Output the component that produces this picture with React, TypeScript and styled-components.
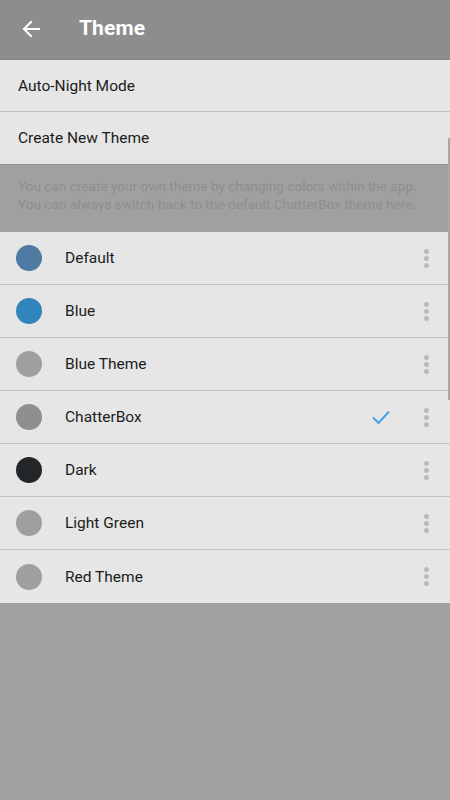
import styled, { createGlobalStyle } from 'styled-components';

const GlobalStyle = createGlobalStyle`
  html, body {
    margin: 0;
    padding: 0;
    background: #a0a0a0;
  }
  body {
    font-family: Roboto, "Liberation Sans", sans-serif;
  }
`;

type Theme = { name: string; color: string; checked?: boolean };

const themes: Theme[] = [
  { name: 'Default', color: '#4f7aa1' },
  { name: 'Blue', color: '#2f85bc' },
  { name: 'Blue Theme', color: '#9f9f9f' },
  { name: 'ChatterBox', color: '#8e8e8e', checked: true },
  { name: 'Dark', color: '#232628' },
  { name: 'Light Green', color: '#9f9f9f' },
  { name: 'Red Theme', color: '#9f9f9f' },
];

function App() {
  return (
    <Screen>
      <GlobalStyle />
      <Header>
        <BackButton aria-label="back">
          <svg width="20" height="20" viewBox="0 0 20 20" fill="none">
            <path d="M18 10H3M10 3L3 10L10 17" stroke="#fff" strokeWidth="2" strokeLinecap="square" />
          </svg>
        </BackButton>
        <Title>Theme</Title>
      </Header>
      <MenuRow>Auto-Night Mode</MenuRow>
      <MenuRow $last>Create New Theme</MenuRow>
      <Info>
        You can create your own theme by changing colors within the app.
        <br />
        You can always switch back to the default ChatterBox theme here.
      </Info>
      <List>
        {themes.map((t) => (
          <ThemeRow key={t.name}>
            <Swatch $color={t.color} />
            <ThemeName>{t.name}</ThemeName>
            {t.checked && (
              <Check width="20" height="16" viewBox="0 0 20 16" fill="none">
                <path d="M2 8.5L7.5 14L18 2.5" stroke="#4aa3e8" strokeWidth="2.2" />
              </Check>
            )}
            <Kebab>
              <Dot />
              <Dot />
              <Dot />
            </Kebab>
          </ThemeRow>
        ))}
      </List>
      <ScrollThumb />
    </Screen>
  );
}

export default App;

const Screen = styled.div`
  position: relative;
  width: 450px;
  min-height: 800px;
  background: #a0a0a0;
  overflow: hidden;
`;

const Header = styled.header`
  display: flex;
  align-items: center;
  height: 60px;
  background: #8d8d8d;
  border-bottom: 1px solid #838383;
  box-sizing: border-box;
`;

const BackButton = styled.button`
  display: flex;
  align-items: center;
  justify-content: center;
  width: 24px;
  height: 24px;
  margin: 0 0 2px 19px;
  padding: 0;
  border: 0;
  background: transparent;
`;

const Title = styled.h1`
  margin: 0 0 4px 36px;
  font-size: 21px;
  font-weight: 700;
  color: #ffffff;
  letter-spacing: 0.1px;
`;

const MenuRow = styled.div<{ $last?: boolean }>`
  display: flex;
  align-items: center;
  height: ${(p) => (p.$last ? '53px' : '52px')};
  padding-left: 18px;
  box-sizing: border-box;
  background: #e6e6e6;
  border-bottom: 1px solid ${(p) => (p.$last ? '#8f8f8f' : '#c2c2c2')};
  font-size: 15.5px;
  color: #1c1c1c;
`;

const Info = styled.p`
  margin: 0;
  height: 67px;
  padding: 12px 18px 0;
  box-sizing: border-box;
  background: #a0a0a0;
  font-size: 13.6px;
  line-height: 18px;
  color: #8e8e8e;
`;

const List = styled.div`
  display: flex;
  flex-direction: column;
  background: #e6e6e6;
`;

const ThemeRow = styled.div`
  display: flex;
  align-items: center;
  height: 53px;
  box-sizing: border-box;
  padding-left: 16px;
  border-bottom: 1px solid #c4c4c4;

  &:last-child {
    border-bottom: 0;
  }
`;

const Swatch = styled.span<{ $color: string }>`
  width: 26px;
  height: 26px;
  border-radius: 50%;
  background: ${(p) => p.$color};
  flex-shrink: 0;
`;

const ThemeName = styled.span`
  flex: 1;
  margin-left: 23px;
  font-size: 15.5px;
  color: #1c1c1c;
`;

const Check = styled.svg`
  margin-right: 33px;
`;

const Kebab = styled.div`
  display: flex;
  flex-direction: column;
  gap: 2px;
  width: 6px;
  margin-right: 20px;
`;

const Dot = styled.span`
  width: 5px;
  height: 5px;
  border-radius: 50%;
  background: #b7bbc2;
`;

const ScrollThumb = styled.div`
  position: absolute;
  top: 138px;
  right: 0;
  width: 2px;
  height: 262px;
  background: #a8a8a8;
`;
